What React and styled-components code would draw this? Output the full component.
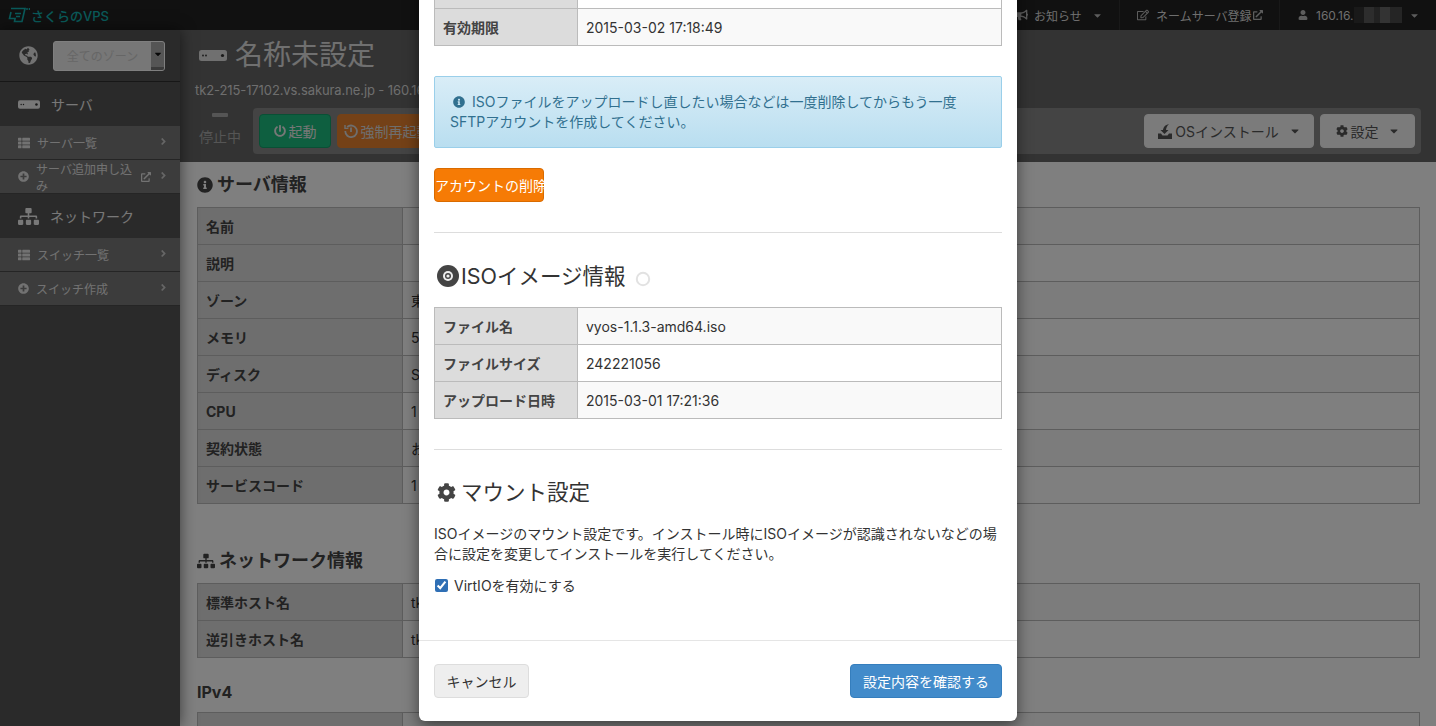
import React from "react";
import styled, { createGlobalStyle } from "styled-components";
import {
  FaCaretDown,
  FaCog,
  FaExternalLinkAlt,
  FaGlobeAmericas,
  FaInfoCircle,
  FaBullhorn,
  FaPlusCircle,
  FaPowerOff,
  FaRegEdit,
  FaSitemap,
  FaThList,
  FaUser,
  FaAngleRight,
} from "react-icons/fa";

const GlobalStyle = createGlobalStyle`
  html, body { margin: 0; padding: 0; background: #fff; }
  * { box-sizing: border-box; }
  body {
    font-family: Inter, "Noto Sans CJK JP", sans-serif;
    font-size: 14px;
    color: #333;
  }
`;

const Page = styled.div`
  position: relative;
  width: 1436px;
  height: 726px;
  overflow: hidden;
  background: #fff;
`;

const Navbar = styled.header`
  height: 30px;
  background: #222;
  display: flex;
  align-items: center;
  justify-content: space-between;
`;

const Logo = styled.div`
  display: flex;
  align-items: center;
  gap: 1px;
  padding-left: 8px;
  color: #12b4b4;
  font-size: 13px;
  font-weight: 500;
`;

const NavRight = styled.nav`
  display: flex;
  height: 30px;
`;

const NavItem = styled.div`
  display: flex;
  align-items: center;
  gap: ${({ $gap }) => $gap || 7}px;
  width: ${({ $width }) => $width}px;
  padding-left: ${({ $pad }) => $pad || 17}px;
  border-left: ${({ $first }) => ($first ? "none" : "1px solid #333")};
  color: #ddd;
  font-size: 12px;
  svg { flex: none; color: #bbb; }
`;

const Mosaic = styled.span`
  width: 48px;
  height: 16px;
  margin-left: -7px;
  background: linear-gradient(90deg, #333 0 10px, #5a5a5a 10px 20px, #444 20px 26px, #666 26px 36px, #4a4a4a 36px 48px);
`;

const Body = styled.div`
  display: flex;
  height: 696px;
`;

const Sidebar = styled.aside`
  width: 180px;
  flex: none;
  background: #555;
  box-shadow: 0 0 14px rgba(0, 0, 0, 0.55);
  position: relative;
  z-index: 1;
`;

const ZoneRow = styled.div`
  height: 52px;
  display: flex;
  align-items: center;
  gap: 15px;
  padding-left: 19px;
  border-bottom: 1px solid #2e2e2e;
  color: #e4e4e4;
`;

const ZoneSelect = styled.div`
  width: 112px;
  height: 30px;
  display: flex;
  border: 1px solid #fff;
  border-radius: 3px;
  background: #fff;
  overflow: hidden;
`;

const ZoneLabel = styled.span`
  flex: 1;
  display: flex;
  align-items: center;
  justify-content: center;
  background: #eee;
  color: #cdcdcd;
  font-size: 12px;
`;

const ZoneCaret = styled.span`
  width: 13px;
  display: flex;
  align-items: center;
  justify-content: center;
  background: #aaa;
  color: #111;
  border-bottom: 3px solid #777;
  font-size: 10px;
`;

const SideHead = styled.div`
  height: 44px;
  display: flex;
  align-items: center;
  gap: 11px;
  padding-left: 18px;
  color: #f0f0f0;
  font-size: 14px;
`;

const SideLink = styled.a`
  height: 34px;
  display: flex;
  align-items: center;
  gap: 7px;
  padding-left: 18px;
  background: #787878;
  border-bottom: 1px solid #4a4a4a;
  color: #e4e4e4;
  font-size: 12px;
  svg { flex: none; }
`;

const Chevron = styled.span`
  margin-left: auto;
  margin-right: 11px;
  margin-top: -3px;
  display: flex;
  color: #ccc;
`;

const Main = styled.main`
  flex: 1;
  min-width: 0;
`;

const Header = styled.div`
  height: 132px;
  background: #666;
  padding: 8px 15px 8px 15px;
`;

const TitleRow = styled.div`
  display: flex;
  align-items: center;
  gap: 8px;
  height: 34px;
  padding-left: 4px;
  color: #fff;
  font-size: 28px;
  line-height: 34px;
  color: #e0e0e0;
`;

const HostLine = styled.div`
  margin-top: 8px;
  height: 20px;
  line-height: 20px;
  color: #dcdcdc;
  font-size: 13px;
  letter-spacing: -0.1px;
`;

const ActionRow = styled.div`
  display: flex;
  margin-top: 8px;
  align-items: stretch;
  gap: 8px;
`;

const Status = styled.div`
  width: 50px;
  display: flex;
  flex-direction: column;
  align-items: center;
  padding-top: 5px;
  gap: 12px;
  color: #aaa;
  font-size: 14px;
  line-height: 16px;
`;

const StatusDash = styled.span`
  width: 16px;
  height: 4px;
  border-radius: 1px;
  background: #aaa;
`;

const Toolbar = styled.div`
  flex: 1;
  height: 46px;
  margin-right: 0;
  padding: 6px;
  display: flex;
  gap: 6px;
  background: #888;
  border-radius: 4px;
`;

const ToolButton = styled.button`
  height: 34px;
  width: ${({ $width }) => $width}px;
  display: inline-flex;
  align-items: center;
  justify-content: center;
  gap: ${({ $gap }) => $gap ?? 3}px;
  border: 1px solid ${({ $border }) => $border || "#f4f4f4"};
  border-radius: 4px;
  background: ${({ $bg }) => $bg || "#f6f6f6"};
  color: ${({ $color }) => $color || "#555"};
  font: inherit;
  font-size: 14px;
  padding: 0;
  white-space: nowrap;
`;

const ToolSpacer = styled.div`
  flex: 1;
`;

const ToolGap = styled.div`
  width: ${({ $width }) => $width}px;
`;

const Content = styled.div`
  padding: 12px 16px 0 17px;
`;

const SectionTitle = styled.h2`
  margin: 0 0 11px;
  height: 22px;
  display: flex;
  align-items: center;
  gap: 4px;
  font-size: 18px;
  line-height: 22px;
  font-weight: 700;
  color: #444;
`;

const SubTitle = styled.h3`
  margin: 24px 0 10px;
  font-size: 16px;
  line-height: 20px;
  font-weight: 700;
  color: #444;
`;

const InfoTable = styled.table`
  width: 100%;
  border-collapse: collapse;
  table-layout: fixed;
  margin-bottom: ${({ $after }) => $after || 0}px;
  th, td {
    height: 37px;
    padding: 0 8px;
    border: 1px solid #bbb;
    text-align: left;
    white-space: nowrap;
    overflow: hidden;
    font-size: 14px;
  }
  th {
    width: ${({ $labelWidth }) => $labelWidth || 205}px;
    background: #dcdcdc;
    font-weight: 700;
    color: #444;
  }
  td { color: #333; background: #fff; }
  tr:nth-child(odd) td { background: #f9f9f9; }
`;

const Overlay = styled.div`
  position: absolute;
  inset: 0;
  z-index: 10;
  background: rgba(0, 0, 0, 0.5);
  display: flex;
  justify-content: center;
  align-items: flex-start;
`;

const Modal = styled.div`
  width: 598px;
  margin-top: -66px;
  background: #fff;
  border-radius: 6px;
  box-shadow: 0 5px 15px rgba(0, 0, 0, 0.5);
`;

const ModalBody = styled.div`
  padding: 0 15px;
`;

const Alert = styled.div`
  margin: 30px 0 20px;
  height: 72px;
  padding: 15px 15px;
  border: 1px solid #9acfea;
  border-radius: 2px;
  background: linear-gradient(to bottom, #d9edf7, #b9def0);
  color: #31708f;
  font-size: 14px;
  line-height: 20px;
  svg { vertical-align: -1px; margin: 0 7px 0 3px; }
`;

const Button = styled.button`
  height: 34px;
  width: ${({ $width }) => $width}px;
  padding: 0;
  border: 1px solid ${({ $border }) => $border};
  border-radius: 4px;
  background: ${({ $bg }) => $bg};
  color: ${({ $color }) => $color || "#fff"};
  font: inherit;
  font-size: 14px;
  white-space: nowrap;
`;

const Divider = styled.hr`
  margin: ${({ $top }) => $top}px 0 0;
  border: 0;
  border-top: 1px solid #ddd;
`;

const ModalHeading = styled.h3`
  margin: ${({ $top }) => $top}px 0 ${({ $bottom }) => $bottom}px;
  height: 30px;
  display: flex;
  align-items: center;
  gap: ${({ $gap }) => $gap}px;
  padding-left: 3px;
  font-size: 21.5px;
  line-height: 30px;
  font-weight: 400;
  color: #333;
`;

const Spinner = styled.svg`
  margin-left: 7px;
  margin-top: 6px;
`;

const Description = styled.p`
  margin: 0;
  font-size: 14px;
  line-height: 20px;
  color: #333;
`;

const CheckRow = styled.label`
  display: flex;
  align-items: center;
  gap: 6px;
  margin-top: 11px;
  height: 20px;
  font-size: 14px;
  color: #333;
`;

const Check = styled.input`
  margin: 0 0 0 1px;
  width: 13px;
  height: 13px;
  accent-color: #2f6fb5;
`;

const ModalFooter = styled.footer`
  margin-top: 45px;
  height: 81px;
  padding: 23px 15px 0;
  display: flex;
  justify-content: space-between;
  border-top: 1px solid #e5e5e5;
`;

const ServerIcon = ({ width = 28, height = 11, color = "currentColor" }) => (
  <svg width={width} height={height} viewBox="0 0 28 11">
    <rect width="28" height="11" rx="2.5" fill={color} />
    <circle cx="4" cy="5.5" r="0.9" fill="#333" />
    <circle cx="7" cy="5.5" r="0.9" fill="#333" />
    <circle cx="23.5" cy="5.5" r="1.6" fill="#333" />
  </svg>
);

const DiscIcon = () => (
  <svg width="22" height="22" viewBox="0 0 22 22">
    <circle cx="11" cy="11" r="11" fill="#444" />
    <circle cx="11" cy="11" r="5" fill="#eee" />
    <circle cx="11" cy="11" r="3" fill="#444" />
    <circle cx="11" cy="11" r="1.6" fill="#eee" />
  </svg>
);

const RestartIcon = () => (
  <svg width="14" height="14" viewBox="0 0 14 14" fill="none" stroke="currentColor" strokeWidth="1.8">
    <path d="M3.2 3A5.8 5.8 0 1 1 1.3 7" />
    <path d="M1 1v3.4h3.4" strokeWidth="1.4" />
    <path d="M7 3.5V8" />
  </svg>
);

const InstallIcon = () => (
  <svg width="16" height="15" viewBox="0 0 16 15" fill="currentColor">
    <path d="M12 0C8 1 6.500 3 6 6H3.500l4 4 4-4H9c.3-2.500 1.200-4.500 3-6z" />
    <path d="M1 9.500h3l1.500 2h5l1.500-2h3V15H1z" />
  </svg>
);

const LogoMark = () => (
  <svg width="22" height="16" viewBox="0 0 22 16" fill="none" stroke="#12b4b4" strokeWidth="1.6">
    <path d="M3 1.500h14l-3 13H6.500l.6-3H1.500L3 5" />
    <path d="M7 6.500h6M8 9.500h4" />
    <path d="M19 1v2M21.500 1v2" strokeWidth="1.5" />
  </svg>
);

const serverRows = [
  ["名前", ""],
  ["説明", ""],
  ["ゾーン", "東京第2"],
  ["メモリ", "512MB"],
  ["ディスク", "SSD 20GB"],
  ["CPU", "1 Core"],
  ["契約状態", "お試し中"],
  ["サービスコード", "1"],
];

const Rows = ({ rows }) => (
  <tbody>
    {rows.map(([label, value]) => (
      <tr key={label}>
        <th>{label}</th>
        <td>{value}</td>
      </tr>
    ))}
  </tbody>
);

export default function App() {
  return (
    <Page>
      <GlobalStyle />
      <Navbar>
        <Logo>
          <LogoMark />
          さくらのVPS
        </Logo>
        <NavRight>
          <NavItem $first $width={120} $gap={6}>
            <FaBullhorn size={12} />
            お知らせ
            <FaCaretDown size={11} style={{ marginLeft: 4 }} />
          </NavItem>
          <NavItem $width={160} $gap={7}>
            <FaRegEdit size={12} />
            <span>ネームサーバ登録</span>
            <FaExternalLinkAlt size={10} style={{ marginLeft: -6 }} />
          </NavItem>
          <NavItem $width={157} $pad={18} $gap={8}>
            <FaUser size={10} />
            160.16.
            <Mosaic />
            <FaCaretDown size={11} style={{ marginLeft: -1 }} />
          </NavItem>
        </NavRight>
      </Navbar>
      <Body>
        <Sidebar>
          <ZoneRow>
            <FaGlobeAmericas size={19} />
            <ZoneSelect>
              <ZoneLabel>全てのゾーン</ZoneLabel>
              <ZoneCaret>
                <FaCaretDown size={10} />
              </ZoneCaret>
            </ZoneSelect>
          </ZoneRow>
          <SideHead>
            <ServerIcon width={22} height={9} />
            サーバ
          </SideHead>
          <SideLink>
            <FaThList size={12} />
            サーバ一覧
            <Chevron><FaAngleRight size={11} /></Chevron>
          </SideLink>
          <SideLink>
            <FaPlusCircle size={11} />
            サーバ追加申し込み
            <FaExternalLinkAlt size={10} style={{ marginLeft: -6 }} />
            <Chevron><FaAngleRight size={11} /></Chevron>
          </SideLink>
          <SideHead>
            <FaSitemap size={21} />
            ネットワーク
          </SideHead>
          <SideLink>
            <FaThList size={12} />
            スイッチ一覧
            <Chevron><FaAngleRight size={11} /></Chevron>
          </SideLink>
          <SideLink>
            <FaPlusCircle size={11} />
            スイッチ作成
            <Chevron><FaAngleRight size={11} /></Chevron>
          </SideLink>
        </Sidebar>
        <Main>
          <Header>
            <TitleRow>
              <ServerIcon />
              名称未設定
            </TitleRow>
            <HostLine>tk2-215-17102.vs.sakura.ne.jp - 160.16.72.106</HostLine>
            <ActionRow>
              <Status>
                <StatusDash />
                停止中
              </Status>
              <Toolbar>
                <ToolButton $width={72} $bg="#1dbf80" $border="#12a06a" $color="#eee">
                  <FaPowerOff size={12} />
                  起動
                </ToolButton>
                <ToolButton $width={100} $bg="#e8822e" $border="#e8822e" $color="#ddd">
                  <RestartIcon />
                  強制再起動
                </ToolButton>
                <ToolSpacer />
                <ToolButton $width={170} $gap={2}>
                  <InstallIcon />
                  OSインストール
                  <FaCaretDown size={12} style={{ marginLeft: 8 }} />
                </ToolButton>
                <ToolButton $width={95} $gap={3}>
                  <FaCog size={12} />
                  設定
                  <FaCaretDown size={12} style={{ marginLeft: 6 }} />
                </ToolButton>
              </Toolbar>
            </ActionRow>
          </Header>
          <Content>
            <SectionTitle>
              <FaInfoCircle size={16} />
              サーバ情報
            </SectionTitle>
            <InfoTable $after={46}>
              <Rows rows={serverRows} />
            </InfoTable>
            <SectionTitle>
              <FaSitemap size={18} />
              ネットワーク情報
            </SectionTitle>
            <InfoTable>
              <Rows rows={[["標準ホスト名", "tk2-215-17102.vs.sakura.ne.jp"], ["逆引きホスト名", "tk2-215-17102.vs.sakura.ne.jp"]]} />
            </InfoTable>
            <SubTitle>IPv4</SubTitle>
            <InfoTable>
              <Rows rows={[["アドレス", "160.16.72.106"]]} />
            </InfoTable>
          </Content>
        </Main>
      </Body>
      <Overlay>
        <Modal>
          <ModalBody>
            <InfoTable $labelWidth={143}>
              <Rows rows={[["ユーザ名", "sftp"], ["パスワード", "********"], ["有効期限", "2015-03-02 17:18:49"]]} />
            </InfoTable>
            <Alert>
              <FaInfoCircle size={12} />
              ISOファイルをアップロードし直したい場合などは一度削除してからもう一度
              <br />
              SFTPアカウントを作成してください。
            </Alert>
            <Button $width={110} $bg="#f67b05" $border="#d96b00">アカウントの削除</Button>
            <Divider $top={30} />
            <ModalHeading $top={28} $bottom={16} $gap={2}>
              <DiscIcon />
              ISOイメージ情報
              <Spinner width="16" height="16" viewBox="0 0 16 16" fill="none">
                <circle cx="8" cy="8" r="6.2" stroke="#e2e2e2" strokeWidth="2" />
              </Spinner>
            </ModalHeading>
            <InfoTable $labelWidth={143}>
              <Rows rows={[["ファイル名", "vyos-1.1.3-amd64.iso"], ["ファイルサイズ", "242221056"], ["アップロード日時", "2015-03-01 17:21:36"]]} />
            </InfoTable>
            <Divider $top={30} />
            <ModalHeading $top={27} $bottom={17} $gap={5}>
              <FaCog size={19} color="#444" />
              マウント設定
            </ModalHeading>
            <Description>
              ISOイメージのマウント設定です。インストール時にISOイメージが認識されないなどの場合に設定を変更してインストールを実行してください。
            </Description>
            <CheckRow>
              <Check type="checkbox" defaultChecked />
              VirtIOを有効にする
            </CheckRow>
          </ModalBody>
          <ModalFooter>
            <Button $width={95} $bg="#eee" $border="#ddd" $color="#333">キャンセル</Button>
            <Button $width={152} $bg="#428bca" $border="#357ebd">設定内容を確認する</Button>
          </ModalFooter>
        </Modal>
      </Overlay>
    </Page>
  );
}
